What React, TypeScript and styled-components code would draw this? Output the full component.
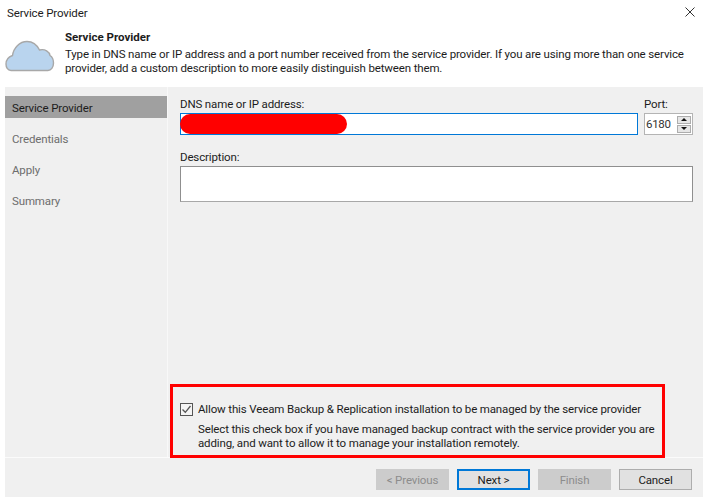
import { createGlobalStyle, styled } from 'styled-components';

const GlobalStyle = createGlobalStyle`
  html, body {
    margin: 0;
    padding: 0;
    background: #ffffff;
  }
  body {
    font-family: "Roboto", "Open Sans", sans-serif;
    font-size: 11.5px;
    letter-spacing: -0.14px;
    color: #1c1c1c;
  }
`;

// window shell

const Dialog = styled.div`
  width: 703px;
  height: 497px;
  display: flex;
  flex-direction: column;
  overflow: hidden;
  background: #ffffff;
`;

const TitleBar = styled.div`
  height: 30px;
  flex: none;
  display: flex;
  align-items: center;
  justify-content: space-between;
  padding: 0 8px 4px 7px;
  box-sizing: border-box;
`;

const CloseButton = styled.button`
  border: none;
  background: none;
  padding: 0;
  display: flex;
  width: 10px;
  height: 10px;
  margin-top: -2px;
`;

// header with cloud and intro

const Header = styled.header`
  height: 57px;
  flex: none;
  display: flex;
  padding: 0 0 0 5px;
  box-sizing: border-box;
`;

const HeaderIcon = styled.div`
  width: 60px;
  flex: none;
  padding-top: 10px;
`;

const HeaderText = styled.div`
  line-height: 14px;
  white-space: nowrap;
`;

const HeaderTitle = styled.div`
  font-weight: 700;
  letter-spacing: 0;
  margin-bottom: 3px;
`;

// body: steps on the left and form on the right

const Main = styled.div`
  flex: 1;
  min-height: 0;
  margin-left: 5px;
  display: flex;
  background: #f0f0f0;
`;

const Sidebar = styled.nav`
  width: 162px;
  flex: none;
  padding-top: 9px;
  border-right: 1px solid #f8f8f8;
`;

const Step = styled.div<{ $active?: boolean }>`
  height: 22px;
  margin-bottom: 9px;
  padding: 1px 0 0 7px;
  box-sizing: border-box;
  display: flex;
  align-items: center;
  background: ${({ $active }) => ($active ? '#a0a0a0' : 'transparent')};
  color: ${({ $active }) => ($active ? '#1c1c1c' : '#6d6d6d')};
`;

const Form = styled.div`
  flex: 1;
  min-width: 0;
  position: relative;
  display: flex;
  flex-direction: column;
  padding: 10px 10px 0 12px;
`;

const Row = styled.div`
  display: flex;
  gap: 6px;
`;

const FieldGroup = styled.div<{ $grow?: boolean }>`
  display: flex;
  flex-direction: column;
  flex: ${({ $grow }) => ($grow ? 1 : 'none')};
  min-width: 0;
`;

const Label = styled.label`
  height: 16px;
  line-height: 14px;
`;

const AddressInput = styled.div`
  position: relative;
  height: 22px;
  box-sizing: border-box;
  background: #ffffff;
  border: 1px solid #0078d7;
`;

const RedactBlob = styled.div`
  position: absolute;
  left: -1px;
  top: 0;
  width: 167px;
  height: 20px;
  border-radius: 10px;
  background: #ff0000;
`;

const PortBox = styled.div`
  width: 49px;
  height: 22px;
  box-sizing: border-box;
  display: flex;
  align-items: center;
  justify-content: space-between;
  background: #ffffff;
  border: 1px solid #b4b4b4;
  padding: 0 1px 0 1px;
  letter-spacing: -0.3px;
  color: #333333;
`;

const Spinner = styled.div`
  width: 14px;
  display: flex;
  flex-direction: column;
  gap: 1px;
`;

const SpinButton = styled.div`
  height: 8px;
  display: flex;
  align-items: center;
  justify-content: center;
  background: #e6e6e6;
  border: 1px solid #adadad;
  box-sizing: border-box;
`;

const Arrow = styled.span<{ $down?: boolean }>`
  width: 0;
  height: 0;
  border-left: 3px solid transparent;
  border-right: 3px solid transparent;
  ${({ $down }) => ($down ? 'border-top: 3px solid #111;' : 'border-bottom: 3px solid #111;')}
`;

const DescriptionBox = styled.div`
  height: 36px;
  box-sizing: border-box;
  background: #ffffff;
  border: 1px solid #8f8f8f;
  border-bottom-color: #a8a8a8;
`;

const DescriptionGroup = styled(FieldGroup)`
  margin-top: 15px;
`;

// managed by provider option, pushed to the bottom of the form

const Option = styled.div`
  margin-top: auto;
  padding: 0 0 7px 0;
  display: grid;
  grid-template-columns: 13px 1fr;
  column-gap: 5px;
  align-items: center;
  white-space: nowrap;
`;

const CheckBox = styled.span`
  width: 13px;
  height: 13px;
  box-sizing: border-box;
  border: 1px solid #555555;
  background: #f4f4f4;
  display: flex;
`;

const OptionNote = styled.div`
  grid-column: 2;
  margin-top: 6px;
  line-height: 14px;
`;

const Highlight = styled.div`
  position: absolute;
  left: 2px;
  bottom: -1px;
  width: 495px;
  height: 74px;
  box-sizing: border-box;
  border: 3px solid #ff0000;
  pointer-events: none;
`;

// footer buttons

const Footer = styled.footer`
  height: 40px;
  flex: none;
  box-sizing: border-box;
  margin-left: 5px;
  border-top: 1px solid #fbfbfb;
  background: #f0f0f0;
  display: flex;
  justify-content: flex-end;
  gap: 8px;
  padding: 11px 11px 0 0;
`;

const Button = styled.button<{ $primary?: boolean }>`
  width: 73px;
  height: 21px;
  padding: 0;
  font: inherit;
  letter-spacing: inherit;
  box-sizing: border-box;
  background: ${({ disabled }) => (disabled ? '#cccccc' : '#e1e1e1')};
  color: ${({ disabled }) => (disabled ? '#8c8c8c' : '#1c1c1c')};
  border: ${({ $primary, disabled }) =>
    $primary ? '2px solid #0078d7' : disabled ? '1px solid #cccccc' : '1px solid #adadad'};
`;

const Cloud = () => (
  <svg width="50" height="32" viewBox="0 0 50 32" style={{ display: 'block' }}>
    <path
      d="M6 30.5 C2.5 30.5 1 27 1 24 C1 20 3.5 17 7.5 15.5 C8.5 8 14.5 1.5 22 1.5 C27.5 1.5 32 5 34.5 10 C40 8.5 44.5 12 45 15.5 C47.5 17 48.5 20 48.5 23 C48.5 27.5 46 30.5 43 30.5 Z"
      fill="#b9d4ee"
      stroke="#a8a8a8"
      strokeWidth="1.4"
    />
  </svg>
);

const CloseIcon = () => (
  <svg width="10" height="10" viewBox="0 0 10 10">
    <path d="M0.5 0.5 L9.5 9.5 M9.5 0.5 L0.5 9.5" stroke="#333" strokeWidth="1" fill="none" />
  </svg>
);

const CheckIcon = () => (
  <svg width="11" height="11" viewBox="0 0 11 11">
    <path d="M1.5 5.5 L4.3 8.3 L9.5 2" stroke="#555" strokeWidth="1.3" fill="none" />
  </svg>
);

const steps = ['Service Provider', 'Credentials', 'Apply', 'Summary'];

export default function App() {
  return (
    <>
      <GlobalStyle />
      <Dialog>
        <TitleBar>
          <span>Service Provider</span>
          <CloseButton aria-label="Close">
            <CloseIcon />
          </CloseButton>
        </TitleBar>
        <Header>
          <HeaderIcon>
            <Cloud />
          </HeaderIcon>
          <HeaderText>
            <HeaderTitle>Service Provider</HeaderTitle>
            Type in DNS name or IP address and a port number received from the service provider. If you are using more than one service
            <br />
            provider, add a custom description to more easily distinguish between them.
          </HeaderText>
        </Header>
        <Main>
          <Sidebar>
            {steps.map((step, i) => (
              <Step key={step} $active={i === 0}>
                {step}
              </Step>
            ))}
          </Sidebar>
          <Form>
            <Row>
              <FieldGroup $grow>
                <Label>DNS name or IP address:</Label>
                <AddressInput>
                  <RedactBlob />
                </AddressInput>
              </FieldGroup>
              <FieldGroup>
                <Label>Port:</Label>
                <PortBox>
                  6180
                  <Spinner>
                    <SpinButton>
                      <Arrow />
                    </SpinButton>
                    <SpinButton>
                      <Arrow $down />
                    </SpinButton>
                  </Spinner>
                </PortBox>
              </FieldGroup>
            </Row>
            <DescriptionGroup>
              <Label>Description:</Label>
              <DescriptionBox />
            </DescriptionGroup>
            <Option>
              <CheckBox>
                <CheckIcon />
              </CheckBox>
              <span>Allow this Veeam Backup &amp; Replication installation to be managed by the service provider</span>
              <OptionNote>
                Select this check box if you have managed backup contract with the service provider you are
                <br />
                adding, and want to allow it to manage your installation remotely.
              </OptionNote>
            </Option>
            <Highlight />
          </Form>
        </Main>
        <Footer>
          <Button disabled>&lt; Previous</Button>
          <Button $primary>Next &gt;</Button>
          <Button disabled>Finish</Button>
          <Button>Cancel</Button>
        </Footer>
      </Dialog>
    </>
  );
}
